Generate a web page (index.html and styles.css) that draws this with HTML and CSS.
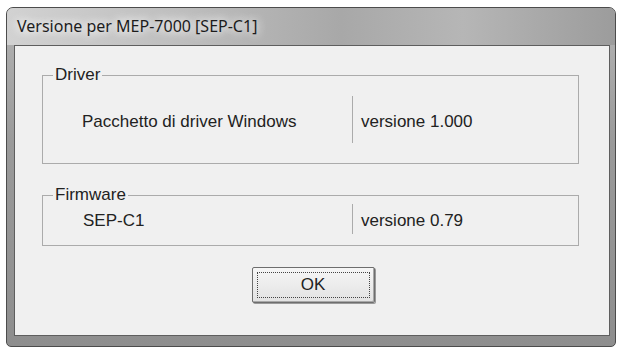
FILE: index.html
```html
<!DOCTYPE html>
<html lang="it">
<head>
  <meta charset="UTF-8" />
  <title>Versione per MEP-7000 [SEP-C1]</title>
  <link rel="stylesheet" href="styles.css">
</head>
<body>

  <div class="window">
    <div class="titlebar">Versione per MEP-7000 [SEP-C1]</div>

    <div class="client">
      <fieldset class="group group-driver">
        <legend>Driver</legend>
        <div class="row row-driver">
          <div class="name">Pacchetto di driver Windows</div>
          <div class="ver">versione 1.000</div>
        </div>
      </fieldset>

      <fieldset class="group group-firmware">
        <legend>Firmware</legend>
        <div class="row row-firmware">
          <div class="name">SEP-C1</div>
          <div class="ver">versione 0.79</div>
        </div>
      </fieldset>

      <div class="actions">
        <button class="btn"><span>OK</span></button>
      </div>
    </div>
  </div>

</body>
</html>
```

FILE: styles.css
```css
body {
  margin: 0;
  background: #fff;
  font-family: 'Liberation Sans', Arial, sans-serif;
  color: #222;
}

.window {
  box-sizing: border-box;
  width: 610px;
  height: 340px;
  margin: 7px 0 0 6px;
  border: 1px solid #4c4c4c;
  border-radius: 7px 7px 5px 5px;
  background: linear-gradient(to bottom, #b4b4b4, #9a9a9a 40%, #8e8e8e);
  display: flex;
  flex-direction: column;
}

.titlebar {
  height: 37px;
  line-height: 36px;
  padding-left: 10px;
  font-family: 'Noto Sans', 'Open Sans', sans-serif;
  font-size: 16px;
  color: #1c1c1c;
  text-shadow: 0 0 8px #fff, 0 0 12px #fff;
  border-radius: 6px 6px 0 0;
  background: linear-gradient(to right, #d2d2d2, #bdbdbd 30%, #a8a8a8 55%, #b6b6b6 75%, #9c9c9c);
}

.client {
  flex: 1;
  margin: 0 5px 10px 7px;
  padding-top: 20px;
  border: 1px solid #5e5e5e;
  background: #f0f0f0;
  font-size: 17px;
}

.group {
  margin: 0 30px 0 27px;
  padding: 0;
  border: 1px solid #ababab;
  min-width: 0;
}

.group legend {
  margin-left: 10px;
  padding: 0 2px;
  line-height: 18px;
  font-size: 17px;
}

.group-driver {
  padding: 12px 0 20px;
}

.group-firmware {
  margin-top: 22px;
  padding: 0 0 11px;
}

.row {
  display: grid;
  grid-template-columns: 309px 1fr;
  align-items: stretch;
}

.row-driver {
  height: 47px;
}

.row-firmware {
  height: 30px;
}

.name,
.ver {
  display: flex;
  align-items: center;
  padding-top: 4px;
  box-sizing: border-box;
}

.name {
  padding-left: 39px;
}

.row-firmware .name {
  padding-left: 40px;
}

.ver {
  padding-left: 8px;
  border-left: 1px solid #ababab;
}

.actions {
  display: flex;
  justify-content: center;
  margin-top: 21px;
}

.btn {
  box-sizing: border-box;
  width: 123px;
  height: 36px;
  padding: 4px;
  margin-left: 2px;
  border: 1px solid #6e6e6e;
  border-radius: 2px;
  background: linear-gradient(to bottom, #f6f6f6, #ececec 50%, #e2e2e2);
  box-shadow: inset -1px -1px 0 #a8a8a8, 1px 1px 0 #9a9a9a;
  font-family: 'Liberation Sans', Arial, sans-serif;
  font-size: 17px;
  color: #222;
}

.btn span {
  display: flex;
  align-items: center;
  justify-content: center;
  height: 100%;
  box-sizing: border-box;
  border: 1px dotted #444;
}
```
